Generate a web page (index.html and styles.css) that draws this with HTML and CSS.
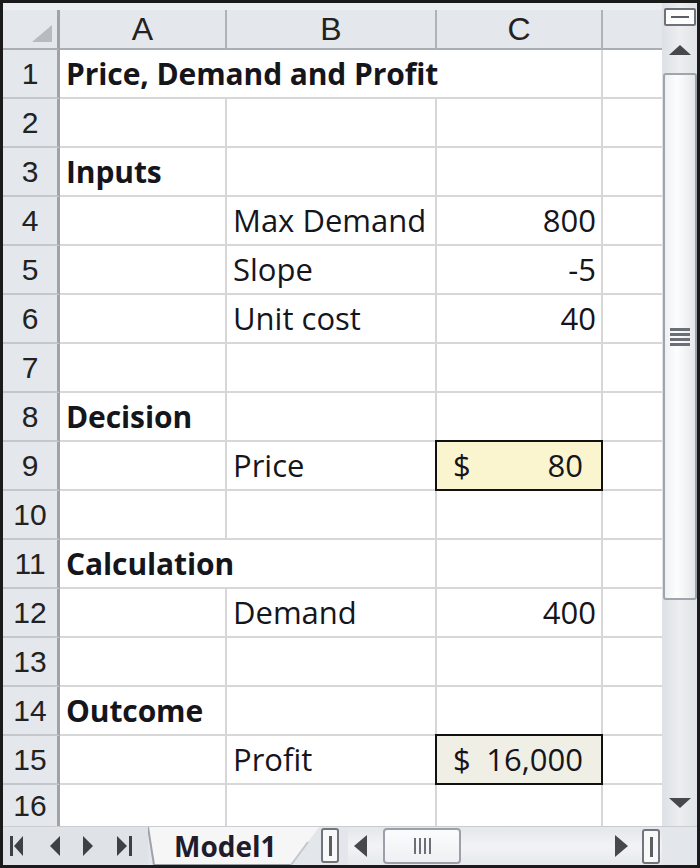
FILE: index.html
```html
<!DOCTYPE html>
<html lang="en">
<head>
<meta charset="utf-8">
<title>Price, Demand and Profit</title>
<link rel="stylesheet" href="styles.css">
</head>
<body>
<div class="window">
  <div class="top">
    <div class="sheet">
      <div class="band"></div>
      <div class="grid">
        <div class="corner"><svg width="20" height="17" viewBox="0 0 20 17"><polygon points="20,0 20,17 0,17" fill="#b7bbc0"/></svg></div>
        <div class="ch">A</div><div class="ch">B</div><div class="ch">C</div><div class="ch last-ch"></div>

        <div class="rh">1</div><div class="cell b span3">Price, Demand and Profit</div><div class="cell last"></div>
        <div class="rh">2</div><div class="cell"></div><div class="cell"></div><div class="cell"></div><div class="cell last"></div>
        <div class="rh">3</div><div class="cell b">Inputs</div><div class="cell"></div><div class="cell"></div><div class="cell last"></div>
        <div class="rh">4</div><div class="cell"></div><div class="cell">Max Demand</div><div class="cell r">800</div><div class="cell last"></div>
        <div class="rh">5</div><div class="cell"></div><div class="cell">Slope</div><div class="cell r">-5</div><div class="cell last"></div>
        <div class="rh">6</div><div class="cell"></div><div class="cell">Unit cost</div><div class="cell r">40</div><div class="cell last"></div>
        <div class="rh">7</div><div class="cell"></div><div class="cell"></div><div class="cell"></div><div class="cell last"></div>
        <div class="rh">8</div><div class="cell b">Decision</div><div class="cell"></div><div class="cell"></div><div class="cell last"></div>
        <div class="rh">9</div><div class="cell"></div><div class="cell">Price</div><div class="cell acct input"><span>$</span><span>80</span></div><div class="cell last"></div>
        <div class="rh">10</div><div class="cell"></div><div class="cell"></div><div class="cell"></div><div class="cell last"></div>
        <div class="rh">11</div><div class="cell b span2">Calculation</div><div class="cell"></div><div class="cell last"></div>
        <div class="rh">12</div><div class="cell"></div><div class="cell">Demand</div><div class="cell r">400</div><div class="cell last"></div>
        <div class="rh">13</div><div class="cell"></div><div class="cell"></div><div class="cell"></div><div class="cell last"></div>
        <div class="rh">14</div><div class="cell b">Outcome</div><div class="cell"></div><div class="cell"></div><div class="cell last"></div>
        <div class="rh">15</div><div class="cell"></div><div class="cell">Profit</div><div class="cell acct output"><span>$</span><span>16,000</span></div><div class="cell last"></div>
        <div class="rh end">16</div><div class="cell end"></div><div class="cell end"></div><div class="cell end"></div><div class="cell last end"></div>
      </div>
    </div>
    <div class="vscroll">
      <div class="split-v"><span class="dash"></span></div>
      <div class="vbtn up"><svg width="22" height="10" viewBox="0 0 22 10"><polygon points="11,0 22,10 0,10" fill="#45484d"/></svg></div>
      <div class="vthumb"><span class="grip-h"></span><span class="grip-h"></span><span class="grip-h"></span><span class="grip-h"></span></div>
      <div class="vtrack"></div>
      <div class="vbtn down"><svg width="22" height="10" viewBox="0 0 22 10"><polygon points="0,0 22,0 11,10" fill="#45484d"/></svg></div>
    </div>
  </div>
  <div class="bottom">
    <div class="nav">
      <svg width="145" height="38" viewBox="0 0 145 38">
        <g fill="#3d4044">
          <rect x="7" y="9" width="3" height="20"/>
          <polygon points="20,9 11,19 20,29"/>
          <polygon points="57,9 47,19 57,29"/>
          <polygon points="80,9 90,19 80,29"/>
          <polygon points="114,9 124,19 114,29"/>
          <rect x="126" y="9" width="3" height="20"/>
        </g>
      </svg>
    </div>
    <div class="tab">
      <svg class="tab-shape" width="171" height="38" viewBox="0 0 171 38"><polygon points="0,0 171,0 143,38 6,38" fill="#f6f6f6"/><polyline points="0,0 6,38 143,38" fill="none" stroke="#9ea3a9" stroke-width="2"/><line x1="143" y1="38" x2="160" y2="15" stroke="#c4c8cc" stroke-width="2"/></svg>
      <span class="tab-label">Model1</span>
    </div>
    <div class="splitbox"><span class="bar"></span></div>
    <div class="hscroll">
      <div class="hbtn"><svg width="13" height="22" viewBox="0 0 13 22"><polygon points="13,0 0,11 13,22" fill="#45484d"/></svg></div>
      <div class="hthumb"><span class="grip-v"></span><span class="grip-v"></span><span class="grip-v"></span><span class="grip-v"></span></div>
      <div class="htrack"></div>
      <div class="hbtn"><svg width="13" height="22" viewBox="0 0 13 22"><polygon points="0,0 13,11 0,22" fill="#45484d"/></svg></div>
      <div class="splitbox right"><span class="bar"></span></div>
    </div>
    <div class="cornerbox"></div>
  </div>
</div>
</body>
</html>
```

FILE: styles.css
```css
* { box-sizing: border-box; margin: 0; padding: 0; }
html, body { width: 700px; height: 868px; overflow: hidden; background: #1b1b1b; }
body { font-family: "Open Sans", Lato, sans-serif; color: #15151c; }

.window {
  width: 700px; height: 868px;
  border: 3px solid #1b1b1b;
  display: flex; flex-direction: column;
  background: #e6e9ed;
}
.top { display: flex; height: 823px; }
.sheet { width: 659px; display: flex; flex-direction: column; background: #fff; }
.band { height: 7px; background: #eceef1; }

.grid {
  flex: 1;
  display: grid;
  grid-template-columns: 57px 167px 210px 166px 59px;
  grid-template-rows: 40px repeat(15, 49px) 41px;
}

.corner {
  background: #e4e7eb;
  border-right: 3px solid #9ea3a9;
  border-bottom: 2px solid #a9aeb4;
  display: flex; justify-content: flex-end; align-items: flex-end;
  padding: 0 5px 6px 0;
}
.ch {
  background: #e4e7eb;
  border-right: 2px solid #aeb3b9;
  border-bottom: 2px solid #a9aeb4;
  display: flex; justify-content: center; align-items: center;
  font: 32px "Liberation Sans", Arial, sans-serif;
  color: #222;
}
.last-ch { border-right: none; }
.rh {
  background: #e4e7eb;
  border-right: 3px solid #9ea3a9;
  border-bottom: 2px solid #c3c7cc;
  display: flex; justify-content: center; align-items: center;
  font: 30px "Liberation Sans", Arial, sans-serif;
  color: #222;
}
.cell {
  background: #fff;
  border-right: 2px solid #d7d7d7;
  border-bottom: 2px solid #d7d7d7;
  display: flex; align-items: center;
  padding: 0 6px;
  font-size: 31px;
  line-height: 1;
  white-space: nowrap;
}
.last { border-right: none; }
.end { border-bottom: none; }
.b { font-weight: 700; font-size: 30px; letter-spacing: -0.1px; }
.r { justify-content: flex-end; padding-right: 5px; }
.span3 { grid-column: span 3; }
.span2 { grid-column: span 2; }

.acct { justify-content: space-between; padding: 0 18px 0 16px; position: relative; }
.acct::after {
  content: ""; position: absolute;
  top: -2px; left: -2px; right: -2px; bottom: -2px;
  border: 2px solid #111;
}
.input { background: #faf5cf; }
.output { background: #efefe6; }

/* vertical scrollbar */
.vscroll {
  width: 35px;
  display: flex; flex-direction: column; align-items: center;
  background: linear-gradient(90deg, #dde1e5, #eceef1 50%, #e1e4e8);
}
.split-v {
  margin-top: 5px; width: 32px; height: 18px;
  border: 2px solid #6f7379; border-radius: 2px; background: #fdfdfd;
  display: flex; align-items: center; justify-content: center;
}
.dash { width: 18px; height: 2px; background: #5b5f65; }
.vbtn { display: flex; align-items: center; justify-content: center; width: 100%; }
.vbtn.up { height: 47px; }
.vbtn.down { height: 46px; }
.vthumb {
  width: 34px; height: 527px;
  border: 2px solid #a0a5ac; border-radius: 3px;
  background: linear-gradient(90deg, #eef1f4, #fdfdfe 40%, #e5e8ec);
  display: flex; flex-direction: column; align-items: center; justify-content: center; gap: 2px;
}
.grip-h { width: 20px; height: 3px; background: #6c7076; }
.vtrack { flex: 1; }

/* bottom bar */
.bottom { height: 39px; display: flex; background: #e3e6ea; border-top: 1px solid #c9cdd2; }
.nav { width: 145px; display: flex; align-items: center; background: #dfe3e8; }
.tab {
  width: 171px; position: relative;
  display: flex; align-items: center;
  padding-left: 26px;
}
.tab-shape { position: absolute; left: 0; top: 0; }
.tab-label {
  position: relative;
  font-weight: 700; font-size: 28px; line-height: 1; color: #1f1c2c;
}
.splitbox {
  margin: 1px 0 0 2px; width: 18px; height: 35px;
  border: 2px solid #71757b; border-radius: 3px; background: #f8f8f8;
  display: flex; align-items: center; justify-content: center;
}
.bar { width: 3px; height: 20px; background: #5a5e63; }
.hscroll {
  flex: 1; display: flex; align-items: center;
  margin-left: 9px;
  background: linear-gradient(180deg, #e4e7eb, #f1f3f5 50%, #e6e9ed);
}
.hbtn { width: 25px; height: 100%; display: flex; align-items: center; justify-content: center; }
.hthumb {
  margin-left: 10px; width: 78px; height: 36px;
  border: 2px solid #9ba0a7; border-radius: 4px;
  background: linear-gradient(180deg, #fbfcfd, #eef0f3);
  display: flex; align-items: center; justify-content: center; gap: 3px;
}
.grip-v { width: 2px; height: 16px; background: #6c7076; }
.htrack { flex: 1; }
.splitbox.right { margin: 1px 2px 0 8px; }
.cornerbox { width: 35px; background: #e3e6ea; }
```
